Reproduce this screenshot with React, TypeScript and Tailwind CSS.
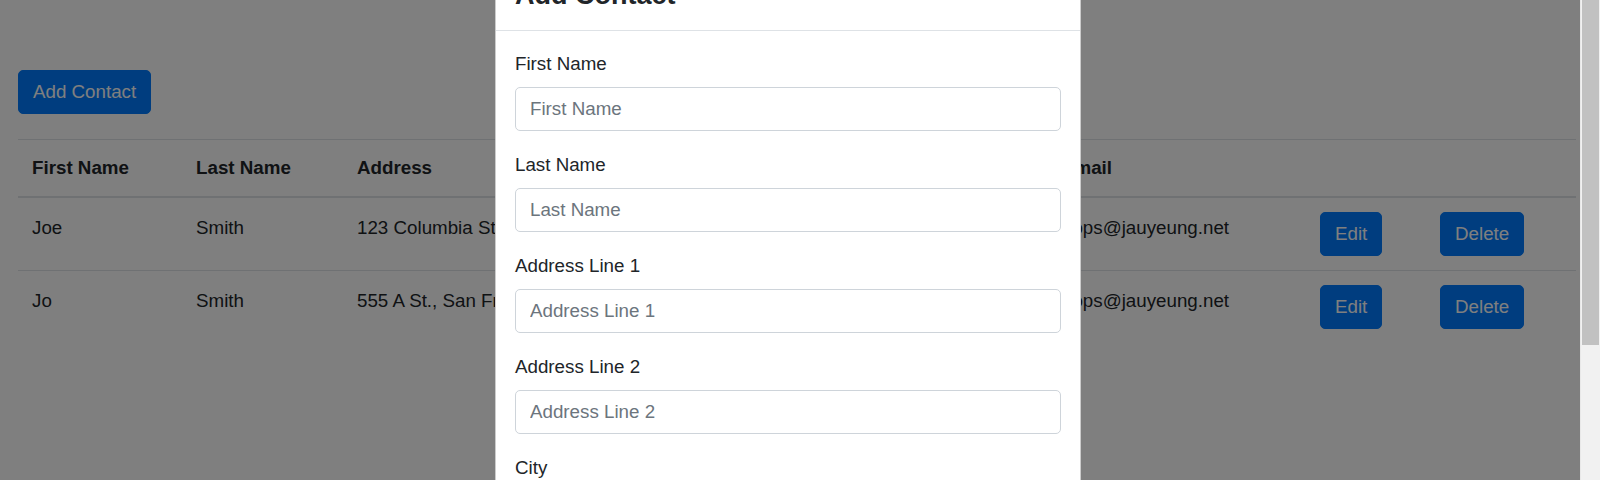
import React from "react";

const contacts = [
  { first: "Joe", last: "Smith", address: "123 Columbia St, New York, NY 10001", email: "hops@jauyeung.net" },
  { first: "Jo", last: "Smith", address: "555 A St., San Francisco, CA 94101", email: "hops@jauyeung.net" },
];

const fields = ["First Name", "Last Name", "Address Line 1", "Address Line 2", "City", "Postal Code"];

function Btn({ children }: { children: React.ReactNode }) {
  return (
    <button className="h-[44px] rounded-[5px] border border-[#007bff] bg-[#007bff] px-[14px] text-[18.75px] leading-[28px] text-white">
      {children}
    </button>
  );
}

export default function App() {
  return (
    <div className="flex h-[480px] w-[1600px] overflow-hidden bg-white font-['Liberation_Sans',Arial,sans-serif] text-[18.75px] leading-[28px] text-[#212529]">
      <div className="relative h-full w-[1580px] overflow-hidden">
        {/* page */}
        <div className="pl-[18px] pt-[70px]">
          <Btn>Add Contact</Btn>
          <table className="mt-[25px] w-[1558px] table-fixed border-collapse text-left">
            <colgroup>
              <col className="w-[164px]" />
              <col className="w-[161px]" />
              <col className="w-[705px]" />
              <col className="w-[258px]" />
              <col className="w-[120px]" />
              <col className="w-[150px]" />
            </colgroup>
            <thead>
              <tr>
                <th className="border-t border-b-2 border-[#dee2e6] p-[14px] align-bottom font-bold">First Name</th>
                <th className="border-t border-b-2 border-[#dee2e6] p-[14px] align-bottom font-bold">Last Name</th>
                <th className="border-t border-b-2 border-[#dee2e6] p-[14px] align-bottom font-bold">Address</th>
                <th className="border-t border-b-2 border-[#dee2e6] p-[14px] align-bottom font-bold">Email</th>
                <th className="border-t border-b-2 border-[#dee2e6] p-[14px]"></th>
                <th className="border-t border-b-2 border-[#dee2e6] p-[14px]"></th>
              </tr>
            </thead>
            <tbody>
              {contacts.map((c, i) => (
                <tr key={i}>
                  <td className="border-t border-[#dee2e6] px-[14px] pb-[14px] pt-[16px] align-top">{c.first}</td>
                  <td className="border-t border-[#dee2e6] px-[14px] pb-[14px] pt-[16px] align-top">{c.last}</td>
                  <td className="border-t border-[#dee2e6] px-[14px] pb-[14px] pt-[16px] align-top">{c.address}</td>
                  <td className="border-t border-[#dee2e6] px-[14px] pb-[14px] pt-[16px] align-top">{c.email}</td>
                  <td className="border-t border-[#dee2e6] px-[14px] py-[14px] align-top">
                    <Btn>Edit</Btn>
                  </td>
                  <td className="border-t border-[#dee2e6] px-[14px] py-[14px] align-top">
                    <Btn>Delete</Btn>
                  </td>
                </tr>
              ))}
            </tbody>
          </table>
        </div>

        {/* backdrop */}
        <div className="absolute inset-0 bg-black/50" />

        {/* modal */}
        <div className="absolute left-[495px] top-[-41px] w-[586px] rounded-[6px] border border-black/20 bg-white">
          <div className="border-b border-[#dee2e6] px-[19px] py-[19px]">
            <h5 className="text-[27px] font-bold leading-[32px]">Add Contact</h5>
          </div>
          <div className="p-[19px]">
            {fields.map((f) => (
              <div key={f} className="mb-[20px]">
                <label className="mb-[9px] block">{f}</label>
                <input
                  placeholder={f}
                  className="block h-[44px] w-full rounded-[5px] border border-[#ced4da] px-[14px] text-[18.75px] text-[#495057] outline-none placeholder:text-[#6c757d]"
                />
              </div>
            ))}
          </div>
        </div>
      </div>

      {/* scrollbar */}
      <div className="h-full w-[20px] border-l border-[#e8e8e8] bg-[#f1f1f1] px-[1px]">
        <div className="h-[345px] w-full bg-[#c1c1c1]" />
      </div>
    </div>
  );
}
